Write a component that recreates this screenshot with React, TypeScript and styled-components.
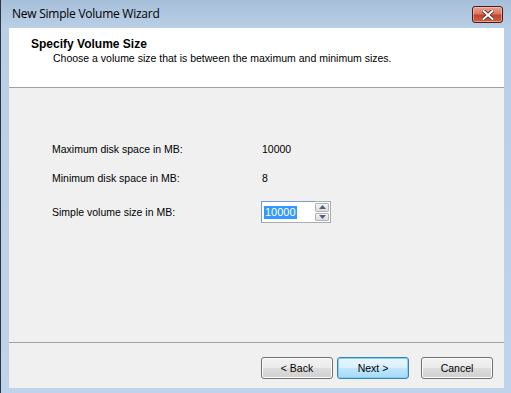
import { useState } from "react";
import styled, { createGlobalStyle } from "styled-components";

const GlobalStyle = createGlobalStyle`
  html, body {
    margin: 0;
    padding: 0;
    background: #ffffff;
  }
  body {
    font-family: "Liberation Sans", Arial, sans-serif;
    font-size: 10.5px;
    color: #000;
  }
`;

const Frame = styled.div`
  width: 511px;
  height: 393px;
  box-sizing: border-box;
  display: flex;
  flex-direction: column;
  padding: 0 7px 5px 8px;
  background: linear-gradient(to bottom, #a6bfd9 0px, #b9cfe6 28px, #bfd4ea 100%);
  border-left: 1px solid #2b3440;
  overflow: hidden;
`;

const TitleBar = styled.div`
  height: 28px;
  display: flex;
  align-items: center;
  justify-content: space-between;
  padding: 0 1px 2px 3px;
  box-sizing: border-box;
`;

const Title = styled.span`
  font-family: "Open Sans", "Noto Sans", sans-serif;
  font-size: 12px;
  color: #000;
  letter-spacing: -0.25px;
`;

const CloseButton = styled.div`
  width: 31px;
  height: 17px;
  box-sizing: border-box;
  border: 1px solid #4a1a1a;
  border-radius: 3px;
  background: linear-gradient(to bottom, #e8a493 0%, #d9775f 45%, #c2442a 55%, #cf6247 100%);
  box-shadow: inset 0 0 0 1px rgba(255, 220, 210, 0.5);
  display: flex;
  align-items: center;
  justify-content: center;
  margin-top: 3px;
`;

const Client = styled.div`
  flex: 1;
  display: flex;
  flex-direction: column;
  background: #f0f0f0;
`;

const Header = styled.div`
  height: 60px;
  box-sizing: border-box;
  background: #ffffff;
  border-bottom: 1px solid #a0a0a0;
  padding: 9px 0 0 22px;
`;

const HeaderTitle = styled.div`
  font-weight: bold;
  font-size: 12px;
  line-height: 14px;
`;

const HeaderText = styled.div`
  line-height: 13px;
  margin-top: 1px;
  padding-left: 22px;
`;

const Body = styled.div`
  flex: 1;
  border-bottom: 1px solid #a0a0a0;
  padding: 55px 0 0 43px;
  display: flex;
  flex-direction: column;
  gap: 16px;
`;

const FieldRow = styled.div`
  display: grid;
  grid-template-columns: 210px auto;
  align-items: center;
  height: 13px;
`;

const Label = styled.span`
  line-height: 13px;
`;

const Spinner = styled.div`
  display: flex;
  height: 22px;
  margin-left: -1px;
`;

const SpinInput = styled.div`
  width: 54px;
  height: 22px;
  box-sizing: border-box;
  border: 1px solid #abadb3;
  border-top-color: #7a9ac6;
  border-left-color: #7a9ac6;
  border-right: none;
  background: #fff;
  display: flex;
  align-items: center;
  padding-left: 2px;
`;

const Selected = styled.span`
  background: #3399ff;
  color: #fff;
  font-size: 11px;
  line-height: 13px;
  padding: 0 1px;
`;

const SpinButtons = styled.div`
  width: 16px;
  height: 22px;
  box-sizing: border-box;
  border: 1px solid #abadb3;
  border-left: none;
  background: #fff;
  display: flex;
  flex-direction: column;
  gap: 1px;
  padding: 1px 1px 1px 0;
`;

const SpinButton = styled.div`
  flex: 1;
  border: 1px solid #b5b5b5;
  border-radius: 1px;
  background: linear-gradient(to bottom, #f5f5f5, #dcdcdc);
  display: flex;
  align-items: center;
  justify-content: center;
`;

const Footer = styled.div`
  height: 45px;
  display: flex;
  align-items: center;
  justify-content: flex-end;
  padding: 0 11px 0 0;
  gap: 4px;
`;

const Button = styled.button<{ $default?: boolean; $gap?: number }>`
  width: 72px;
  height: 22px;
  font-family: "Liberation Sans", Arial, sans-serif;
  font-size: 10.5px;
  color: #000;
  border-radius: 3px;
  border: 1px solid ${(p) => (p.$default ? "#3c7fb1" : "#707070")};
  background: ${(p) =>
    p.$default
      ? "linear-gradient(to bottom, #eaf6fd 0%, #d9f0fc 48%, #bee6fd 52%, #a7d9f5 100%)"
      : "linear-gradient(to bottom, #f2f2f2 0%, #ebebeb 48%, #dddddd 52%, #cfcfcf 100%)"};
  box-shadow: inset 0 0 0 1px ${(p) => (p.$default ? "#7ed3f7" : "#fcfcfc")};
  margin-left: ${(p) => p.$gap ?? 0}px;
  margin-top: 5px;
  padding: 0;
`;

function Arrow({ up }: { up?: boolean }) {
  return (
    <svg width="7" height="4" viewBox="0 0 7 4">
      <path d={up ? "M0 4 L3.5 0 L7 4 Z" : "M0 0 L3.5 4 L7 0 Z"} fill="#4d6185" />
    </svg>
  );
}

export default function App() {
  const [size] = useState("10000");
  return (
    <>
      <GlobalStyle />
      <Frame>
        <TitleBar>
          <Title>New Simple Volume Wizard</Title>
          <CloseButton>
            <svg width="12" height="10" viewBox="0 0 12 10">
              <path
                d="M1.5 1 L10.5 9 M10.5 1 L1.5 9"
                stroke="#4a2a2a"
                strokeWidth="3.6"
                strokeLinecap="square"
              />
              <path
                d="M1.5 1 L10.5 9 M10.5 1 L1.5 9"
                stroke="#ffffff"
                strokeWidth="2"
                strokeLinecap="square"
              />
            </svg>
          </CloseButton>
        </TitleBar>
        <Client>
          <Header>
            <HeaderTitle>Specify Volume Size</HeaderTitle>
            <HeaderText>Choose a volume size that is between the maximum and minimum sizes.</HeaderText>
          </Header>
          <Body>
            <FieldRow>
              <Label>Maximum disk space in MB:</Label>
              <Label>10000</Label>
            </FieldRow>
            <FieldRow>
              <Label>Minimum disk space in MB:</Label>
              <Label>8</Label>
            </FieldRow>
            <FieldRow>
              <Label>Simple volume size in MB:</Label>
              <Spinner>
                <SpinInput>
                  <Selected>{size}</Selected>
                </SpinInput>
                <SpinButtons>
                  <SpinButton>
                    <Arrow up />
                  </SpinButton>
                  <SpinButton>
                    <Arrow />
                  </SpinButton>
                </SpinButtons>
              </Spinner>
            </FieldRow>
          </Body>
          <Footer>
            <Button>&lt; Back</Button>
            <Button $default>Next &gt;</Button>
            <Button $gap={8}>Cancel</Button>
          </Footer>
        </Client>
      </Frame>
    </>
  );
}
